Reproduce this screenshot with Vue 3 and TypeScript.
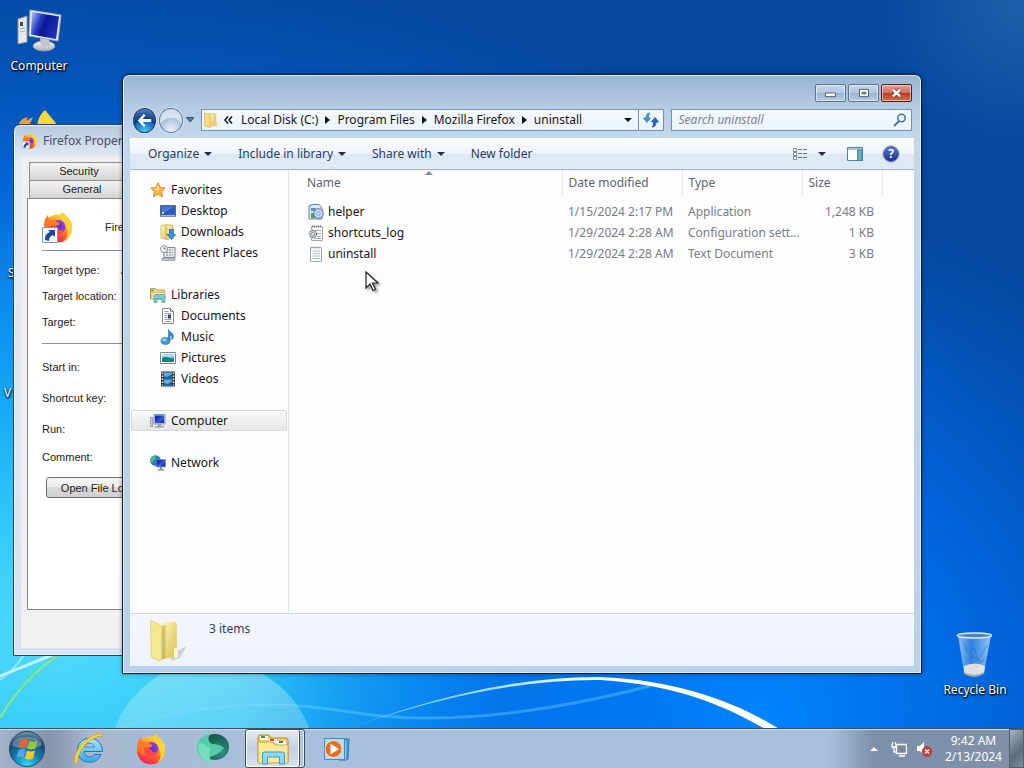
<script setup lang="ts">
import { ref } from 'vue'

interface NavItem {
  label: string
  icon: string
  selected?: boolean
}

interface NavGroup {
  head: NavItem
  items: NavItem[]
}

interface FileRow {
  name: string
  icon: string
  modified: string
  type: string
  size: string
}

const search = ref('')

const crumbs: string[] = ['Local Disk (C:)', 'Program Files', 'Mozilla Firefox', 'uninstall']

const commands = [
  { label: 'Organize', menu: true },
  { label: 'Include in library', menu: true },
  { label: 'Share with', menu: true },
  { label: 'New folder', menu: false },
]

const groups: NavGroup[] = [
  {
    head: { label: 'Favorites', icon: 'star' },
    items: [
      { label: 'Desktop', icon: 'desktop' },
      { label: 'Downloads', icon: 'downloads' },
      { label: 'Recent Places', icon: 'recent' },
    ],
  },
  {
    head: { label: 'Libraries', icon: 'libraries' },
    items: [
      { label: 'Documents', icon: 'document' },
      { label: 'Music', icon: 'music' },
      { label: 'Pictures', icon: 'pictures' },
      { label: 'Videos', icon: 'videos' },
    ],
  },
  { head: { label: 'Computer', icon: 'pc-small', selected: true }, items: [] },
  { head: { label: 'Network', icon: 'network' }, items: [] },
]

const files: FileRow[] = [
  { name: 'helper', icon: 'program', modified: '1/15/2024 2:17 PM', type: 'Application', size: '1,248 KB' },
  { name: 'shortcuts_log', icon: 'config', modified: '1/29/2024 2:28 AM', type: 'Configuration sett...', size: '1 KB' },
  { name: 'uninstall', icon: 'text', modified: '1/29/2024 2:28 AM', type: 'Text Document', size: '3 KB' },
]

const tasks = [
  { label: 'Internet Explorer', icon: 'ie', active: false },
  { label: 'Firefox', icon: 'firefox', active: false },
  { label: 'Browser', icon: 'swirl', active: false },
  { label: 'Windows Explorer', icon: 'explorer', active: true },
  { label: 'Media Player', icon: 'media', active: false },
]
</script>

<template>
  <div class="desktop">
    <svg class="defs" aria-hidden="true">
      <defs>
        <linearGradient id="gFolder" x1="0" x2="1" y1="0" y2="1"><stop offset="0" stop-color="#fdf6b8" /><stop offset="1" stop-color="#dcc050" /></linearGradient>
        <linearGradient id="gScreen" x1="0" x2="1" y1="0" y2="1"><stop offset="0" stop-color="#0a1fa0" /><stop offset=".45" stop-color="#1c3cc8" /><stop offset=".5" stop-color="#3c64dc" /><stop offset="1" stop-color="#0a22a8" /></linearGradient>
        <linearGradient id="gMonitor" x1="0" x2="1" y1=".2" y2=".6"><stop offset="0" stop-color="#9cb4f4" /><stop offset=".3" stop-color="#2440c0" /><stop offset=".5" stop-color="#0a1898" /><stop offset="1" stop-color="#1c34b4" /></linearGradient>
        <linearGradient id="gGrey" x1="0" x2="0" y1="0" y2="1"><stop offset="0" stop-color="#fafafa" /><stop offset="1" stop-color="#a8b0b8" /></linearGradient>
        <linearGradient id="gFox" x1=".8" x2=".3" y1="0" y2="1"><stop offset="0" stop-color="#ffe23a" /><stop offset=".4" stop-color="#ff9a20" /><stop offset=".75" stop-color="#ff4838" /><stop offset="1" stop-color="#e8206c" /></linearGradient>
        <radialGradient id="gFoxCore"><stop offset="0" stop-color="#5a2ad0" /><stop offset="1" stop-color="#9040e0" /></radialGradient>
        <radialGradient id="gOrb" cx=".5" cy=".95" r=".95"><stop offset="0" stop-color="#30d8f8" /><stop offset=".4" stop-color="#1280b0" /><stop offset=".75" stop-color="#164a70" /><stop offset="1" stop-color="#7c98ac" /></radialGradient>
        <linearGradient id="gIe" x1="0" x2="0" y1="0" y2="1"><stop offset="0" stop-color="#a8e8fc" /><stop offset="1" stop-color="#38a8e4" /></linearGradient>
        <linearGradient id="gBin" x1="0" x2="1"><stop offset="0" stop-color="#a8d4f8" stop-opacity=".85" /><stop offset=".4" stop-color="#4a94e0" stop-opacity=".6" /><stop offset="1" stop-color="#c0e0fa" stop-opacity=".8" /></linearGradient>
        <radialGradient id="gTeal" cx=".7" cy=".7" r=".8"><stop offset="0" stop-color="#2c9080" /><stop offset="1" stop-color="#185048" /></radialGradient>
      </defs>

      <symbol id="computer" viewBox="0 0 48 44">
        <path d="M3 10l9-3v26l-9 2z" fill="#e8eae8" stroke="#8c96a0" />
        <path d="M5 13h3v4H5z" fill="#445" />
        <path d="M5 20l5-1M5 23l5-1" stroke="#a0a8b0" />
        <ellipse cx="29" cy="37" rx="11" ry="5" fill="url(#gGrey)" stroke="#909aa4" />
        <path d="M25 29l9 1 1 7h-9z" fill="#c0c6cc" />
        <path d="M15 1l31 5-3 26-29-5z" fill="#e4e8ee" stroke="#a0a8b4" />
        <path d="M17 3l27 4.500-3 22.500L16 25.500z" fill="url(#gMonitor)" />
      </symbol>

      <symbol id="pc-small" viewBox="0 0 16 16">
        <path d="M.5 4.500h2v9h-2z" fill="#c8ccd4" stroke="#80889a" stroke-width=".7" />
        <path d="M4 1.500h11v9.500H4z" fill="#c8d0e8" stroke="#8890a8" />
        <path d="M5 2.500h9v7.500H5z" fill="url(#gScreen)" />
        <path d="M8 11h3v2h3v1.500H5V13h3z" fill="#9aa2b0" />
      </symbol>

      <symbol id="firefox" viewBox="0 0 32 32">
        <circle cx="16" cy="17.500" r="14" fill="url(#gFox)" />
        <path d="M20 1c4 3 9 7 10 13 1 8-3 14-8 16 4-4 5-9 2-14-1-5-5-7-6-10 0-2 1-4 2-5z" fill="#ffd432" />
        <circle cx="16.500" cy="16" r="7" fill="url(#gFoxCore)" />
        <path d="M2 15C2 9 4 6 6 4c0 2 1 4 2 5 3-1 5 0 7 2 2 0 3 1 2 3l-5 1c-2 2-1 5 3 6-5 3-12-1-13-6z" fill="#ff7a28" />
        <path d="M9 15c4-1 8 1 8 4 2 1 4 0 6-1-2 6-11 7-14 1z" fill="#ff4840" />
      </symbol>

      <symbol id="shortcut" viewBox="0 0 16 16">
        <path d="M.5.5h15v15H.5z" fill="#f4f8fc" stroke="#8898a8" />
        <path d="M3 13c0-5 2-7 5-8L6 3h7v7l-2-2c-3 1-4 3-4 6z" fill="#1c4c98" />
      </symbol>

      <symbol id="star" viewBox="0 0 16 16">
        <path d="M8 .8l2.200 4.700 5 .6-3.700 3.500 1 5.200L8 12.200 3.500 14.800l1-5.200L.8 6.100l5-.6z" fill="#fcb83c" stroke="#e08a28" />
        <path d="M8 3l1.300 3.500L8 9 4 7l2.700-.5z" fill="#ffeaa0" />
      </symbol>
      <symbol id="desktop" viewBox="0 0 16 16">
        <path d="M.5 2.500h15v11H.5z" fill="#2a5cc0" stroke="#5a6a8a" />
        <path d="M1.500 3.500h13L2 11z" fill="#4878d4" />
        <path d="M1 12h14v1.500H1z" fill="#a8b8d0" /><path d="M2 9h2v2H2z" fill="#cfe0f8" />
      </symbol>
      <symbol id="downloads" viewBox="0 0 16 16">
        <path d="M1 1.500L7 .5l6 1v13l-6 1-6-1.500z" fill="url(#gFolder)" stroke="#c8ac50" stroke-width=".7" />
        <path d="M6 1v14" stroke="#c8ac50" />
        <path d="M9.500 5.500h4v5H16l-4.500 5L7 10.500h2.500z" fill="#3090e0" stroke="#1c60a8" stroke-width=".6" />
      </symbol>
      <symbol id="recent" viewBox="0 0 16 16">
        <path d="M4 2.500h11v10H4z" fill="#e4e8ec" stroke="#808890" />
        <path d="M6 5h7M6 7.500h7M6 10h7" stroke="#808890" stroke-dasharray="2 1" />
        <path d="M2 13h13v2.500H2z" fill="#b8c0c8" stroke="#808890" stroke-width=".6" />
        <circle cx="4" cy="4" r="3.500" fill="#f6f8fa" stroke="#8c949c" /><path d="M4 2v2h2" fill="none" stroke="#555" stroke-width=".8" />
      </symbol>
      <symbol id="libraries" viewBox="0 0 16 16">
        <path d="M.5 1.500h5l1 1.500h8v9H.5z" fill="#f8e084" stroke="#b89c48" />
        <path d="M1 3.500h3" stroke="#48a848" stroke-width="1.500" />
        <path d="M2 5.500h13v7H2z" fill="#fbeea8" stroke="#c4a854" stroke-width=".7" />
        <path d="M4 15.500V9.500q0-2 2-2h7q2 0 2 2v6h-3v-4H7v4z" fill="#7cc8dc" stroke="#4898b0" stroke-width=".7" />
      </symbol>
      <symbol id="document" viewBox="0 0 16 16">
        <path d="M2.500.5h8l3 3v12h-11z" fill="#fff" stroke="#808890" /><path d="M10.500.5v3h3" fill="none" stroke="#808890" />
        <path d="M4.500 3.500h4M4.500 5.500h7M4.500 7.500h3M4.500 9.500h3M4.500 11.500h7M4.500 13.500h7" stroke="#98a0a8" /><path d="M8 6.500h3v4H8z" fill="#404858" />
      </symbol>
      <symbol id="music" viewBox="0 0 16 16">
        <ellipse cx="5.500" cy="12" rx="4.500" ry="3.500" fill="#3c9ce0" stroke="#1c68a8" stroke-width=".6" />
        <path d="M8.500.5c1 3 5 3 5 7 0 1-1 3-2 3 1-3 0-4-1.500-4.500V12l-1.500-1z" fill="#3488cc" stroke="#1c68a8" stroke-width=".6" />
        <ellipse cx="4.500" cy="11" rx="2" ry="1.200" fill="#a8dcf8" />
      </symbol>
      <symbol id="pictures" viewBox="0 0 16 16">
        <path d="M.5 2.500h15v11H.5z" fill="#fff" stroke="#7c8894" /><path d="M2 4h12v8H2z" fill="#68bce0" />
        <path d="M2 9c3-3 5-2 7-1s3 0 5 0v4H2z" fill="#1c8078" /><path d="M2 4.500h12v2H2z" fill="#bfe8f8" />
      </symbol>
      <symbol id="videos" viewBox="0 0 16 16">
        <path d="M1 .5h14v15H1z" fill="#303840" /><path d="M4 1.500h8v6H4zM4 8.500h8v6H4z" fill="#5cb0e8" />
        <path d="M4 7.500V5l3 1 5-3v4.500zM4 14.500V12l4 1 4-3v4.500z" fill="#1c60a0" />
        <path d="M2.500 1.500v13M13.500 1.500v13" stroke="#e8f0f4" stroke-width="1.500" stroke-dasharray="1.500 1.500" />
      </symbol>
      <symbol id="network" viewBox="0 0 16 16">
        <circle cx="5.500" cy="5.500" r="5.300" fill="#1c78c0" /><path d="M2 2c3-2 5-1 4 1S3 5 3 8C0 7 0 4 2 2zM6 6l4-2v4H7z" fill="#48c080" />
        <path d="M6 4.500h9.500v7.500H6z" fill="#b8c8f0" stroke="#6878a8" stroke-width=".7" /><path d="M6.500 5h8.500v6.500H6.500z" fill="url(#gScreen)" /><path d="M10 12h2v2h2v1.500H8V14h2z" fill="#8890a4" />
      </symbol>
      <symbol id="program" viewBox="0 0 16 16">
        <path d="M1 2l3-1.500h7L14 4v11H1z" fill="#dce8f4" stroke="#6880a0" /><path d="M3 4h5v3H3z" fill="#5c90c8" />
        <path d="M3 9h4v5H3z" fill="#3ca850" /><circle cx="10.500" cy="9.500" r="4.800" fill="#c4d4f4" stroke="#5870b8" /><circle cx="10.500" cy="9.500" r="1.500" fill="#fff" stroke="#7890c8" />
      </symbol>
      <symbol id="config" viewBox="0 0 16 16">
        <path d="M3.500 1.500h11v14h-11z" fill="#fafafa" stroke="#a0a8ac" /><path d="M4 1.500h10" stroke="#707880" stroke-width="2" stroke-dasharray="1 1" />
        <path d="M8 5.500h5M9 8.500h4M9 11.500h4M6 13.500h7" stroke="#a8b0b4" /><circle cx="5" cy="9" r="3.500" fill="#d8dcdf" stroke="#707880" stroke-width="1.500" stroke-dasharray="1.500 1" /><circle cx="5" cy="9" r="1.500" fill="#fff" stroke="#707880" stroke-width=".8" />
      </symbol>
      <symbol id="text" viewBox="0 0 16 16">
        <path d="M2.500 1.500h11v14h-11z" fill="#fafafa" stroke="#a0a8ac" /><path d="M3 1.500h10" stroke="#a0a8ac" stroke-width="2" stroke-dasharray="1 1" />
        <path d="M4.500 5h7.500M4.500 7.500h7.500M4.500 10h7.500M4.500 12.500h7.500" stroke="#b4bcc0" />
      </symbol>
      <symbol id="folder" viewBox="0 0 40 44">
        <path d="M26 34l12-6-7 12-10 3z" fill="#555" opacity=".22" />
        <path d="M12 4l14-1q2 0 2 2v34l-14 2z" fill="url(#gFolder)" />
        <path d="M1 3q0-2 2-1l9 5 1 3v31l-3 2L2 39z" fill="#f4e890" stroke="#dcc868" stroke-width=".7" />
        <path d="M12.500 8l4-2v34l-4 2z" fill="#a89438" opacity=".45" /><path d="M25 30q4-3 4 6v3l-4 1z" fill="#fff8d0" />
      </symbol>
      <symbol id="folder-small" viewBox="0 0 16 16">
        <path d="M6 1.500h6q1 0 1 1v11l-7 1z" fill="url(#gFolder)" stroke="#d8b84c" stroke-width=".5" /><path d="M1.500 1L7 2.500v13L1.500 14z" fill="#f4dc80" stroke="#d8b84c" stroke-width=".7" /><path d="M12 9l3 4-5 2z" fill="#e8d070" />
      </symbol>

      <symbol id="ie" viewBox="0 0 32 32">
        <path d="M29.500 18.500H11c0 6 8 7 10 3h7C24.500 33 4 32 4.500 17 5 1 29.500 1 29.500 18.500z" fill="url(#gIe)" stroke="#1c78bc" />
        <path d="M11.500 14h10c-1-5-9-5-10 0z" fill="#b0c4de" stroke="#1c78bc" stroke-width=".8" />
        <path d="M2 31C-1 24 8 5 25 1q6-1 5 3-2-2-6 0C12 8 5 20 4 30z" fill="#f8d440" stroke="#d8a018" stroke-width=".7" />
      </symbol>
      <symbol id="swirl" viewBox="0 0 32 32">
        <ellipse cx="18" cy="14" rx="14" ry="13" fill="url(#gTeal)" />
        <path d="M0 13C1 6 7 1 14 1c-4 3-3 8 1 10 5 0 8 1 12 4-4 5-8 7-14 9-1 3 0 5 1 7C5 28-1 22 0 13z" fill="#54ccaa" />
        <path d="M2 11c4-3 5 2 9 3s0 8 2 17C4 27 0 19 2 11z" fill="#78dcc0" />
      </symbol>
      <symbol id="explorer" viewBox="0 0 32 32">
        <path d="M1 4q0-2 2-2h9l2 3h15q2 0 2 2v22H1z" fill="#f4cc5c" stroke="#b88c28" />
        <path d="M3 3h8v4H3z" fill="#fff" /><path d="M4 4h4" stroke="#30a030" stroke-width="2" />
        <path d="M12 6h8v4h-8z" fill="#fff" /><path d="M13 7h4" stroke="#d84830" stroke-width="2" /><path d="M20 8h9v4h-9z" fill="#fff" /><path d="M22 9h4" stroke="#3878c8" stroke-width="2" />
        <path d="M1 9h15l2 3h13v18H1z" fill="#fce898" stroke="#d0a840" />
        <path d="M5.500 31V21q0-2 2-2h18q2 0 2 2v10h-5v-7h-12v7z" fill="#90d8f0" stroke="#3c98c0" />
      </symbol>
      <symbol id="media" viewBox="0 0 32 32">
        <path d="M22 6h6l-1 20h-5z" fill="#6cb4e4" stroke="#2c78b4" /><path d="M18 6h8v21h-8z" fill="#88c8ec" stroke="#2c78b4" />
        <path d="M3.500 5.500h20v21h-20z" fill="#b4dcf0" stroke="#4088b8" /><circle cx="12.500" cy="16" r="8.500" fill="#ec6c20" stroke="#fff0e0" stroke-width=".8" /><path d="M9.500 10.500l8.500 5.500-8.500 5.500z" fill="#fff" />
      </symbol>
      <symbol id="orb" viewBox="0 0 36 36">
        <circle cx="18" cy="18" r="17.500" fill="url(#gOrb)" stroke="#284860" />
        <path d="M3 14C6 3 30 3 33 14c-8 5-22 5-30 0z" fill="#fff" opacity=".28" />
        <path d="M12 9q4-2 7 0l-2 8q-3-2-7 0z" fill="#f06028" /><path d="M20.500 10q4 2 8-.5l-2 8q-4 2-8 0z" fill="#98c83c" />
        <path d="M9.500 19q4-2 7 0l-2 8q-4-2-7 0z" fill="#50a8ec" /><path d="M18 19.500q4 2 8 0l-2 8q-4 2-8 0z" fill="#fcc828" />
      </symbol>
      <symbol id="bin" viewBox="0 0 40 48">
        <path d="M3 4l6 38q10 7 20 0l7-38z" fill="url(#gBin)" /><path d="M9 35q11-5 21 0l-1 7q-10 6-20 0z" fill="#f0e8e0" opacity=".9" />
        <path d="M9 12l4 10 6-5 4 12 9-15M11 30l7-5 8 6 4-3" fill="none" stroke="#2060b0" opacity=".45" />
        <ellipse cx="19.500" cy="4.500" rx="17" ry="2.500" fill="#4a84bc" stroke="#d4e8f8" stroke-width="1.500" />
        <path d="M9 42q10 6 20 0" fill="none" stroke="#a8a4a4" stroke-width="2" />
      </symbol>
    </svg>

    <svg class="wallpaper" viewBox="0 0 1024 768" preserveAspectRatio="none" aria-hidden="true">
      <defs>
        <radialGradient id="w0" gradientUnits="userSpaceOnUse" cx="60" cy="640" r="1000" gradientTransform="translate(0 205) scale(1 .68)">
          <stop offset="0" stop-color="#52dafa" /><stop offset=".16" stop-color="#34ccfa" /><stop offset=".36" stop-color="#14a8f6" /><stop offset=".52" stop-color="#0a86ea" /><stop offset=".66" stop-color="#0468d8" /><stop offset=".8" stop-color="#0456bc" /><stop offset="1" stop-color="#0548a0" />
        </radialGradient>
        <radialGradient id="w1" gradientUnits="userSpaceOnUse" cx="760" cy="720" r="520"><stop offset="0" stop-color="#0084fc" /><stop offset=".5" stop-color="#006cec" stop-opacity=".75" /><stop offset="1" stop-color="#0068e4" stop-opacity="0" /></radialGradient>
        <radialGradient id="w2" gradientUnits="userSpaceOnUse" cx="1024" cy="0" r="150"><stop offset="0" stop-color="#4a90b8" stop-opacity=".35" /><stop offset="1" stop-color="#4a90b8" stop-opacity="0" /></radialGradient>
        <linearGradient id="w3" x1="0" x2="1"><stop offset="0" stop-color="#9be8ff" stop-opacity=".5" /><stop offset=".5" stop-color="#dff8ff" /><stop offset=".7" stop-color="#fff" /></linearGradient>
        <linearGradient id="w4" x1="0" x2="0" y1="0" y2="1"><stop offset="0" stop-color="#c8f4f0" stop-opacity=".4" /><stop offset="1" stop-color="#c8f4f0" stop-opacity=".1" /></linearGradient>
      </defs>
      <path d="M0 0h1024v768H0z" fill="url(#w0)" />
      <path d="M0 0h1024v768H0z" fill="url(#w1)" />
      <path d="M0 0h1024v768H0z" fill="url(#w2)" />
      <circle cx="212" cy="765" r="104" fill="url(#w4)" />
      <path d="M120 728Q230 692 350 712T650 686" fill="none" stroke="#7fdcff" stroke-width="3" opacity=".35" />
      <path d="M350 728Q490 676 600 677C680 680 740 704 781 730L767 730C722 704 675 685 600 680Q490 679 350 728z" fill="url(#w3)" />
      <path d="M0 676Q30 664 52 655" fill="none" stroke="#dff8ff" stroke-width="3" opacity=".8" />
      <path d="M0 680Q14 670 24 655" fill="none" stroke="#b8f0ff" stroke-width="2" opacity=".7" />
      <path d="M0 718Q22 680 58 655" fill="none" stroke="#90e878" stroke-width="2" />
    </svg>

    <ul class="shortcuts">
      <li><svg class="big"><use href="#computer" /></svg><span>Computer</span></li>
      <li class="flames">
        <svg viewBox="0 0 44 44"><path d="M20 18q1-10 8-16l10 12 4 6z" fill="#f8d838" /><path d="M2 18q0-7 9-9l-2 4 7-4-4 9z" fill="#f0a040" /></svg>
      </li>
      <li class="peek"><span>S</span></li>
      <li class="peek v"><span>V</span></li>
    </ul>

    <div class="recycle"><svg><use href="#bin" /></svg><span>Recycle Bin</span></div>

    <section class="props">
      <header>
        <span class="fox"><svg><use href="#firefox" /></svg><svg class="arrow"><use href="#shortcut" /></svg></span>
        <h2>Firefox Properties</h2>
      </header>
      <div class="client">
        <div class="tabs">
          <button type="button" class="tab">Security</button>
          <button type="button" class="tab wide">General</button>
        </div>
        <div class="sheet">
          <div class="ident">
            <span class="fox large"><svg><use href="#firefox" /></svg><svg class="arrow"><use href="#shortcut" /></svg></span>
            <span>Firefox</span>
          </div>
          <dl class="fields">
            <dt>Target type:</dt><dd>Application</dd>
            <dt>Target location:</dt><dd></dd>
            <dt>Target:</dt><dd></dd>
          </dl>
          <dl class="fields tall">
            <dt>Start in:</dt><dd></dd>
            <dt>Shortcut key:</dt><dd></dd>
            <dt>Run:</dt><dd></dd>
          </dl>
          <dl class="fields last"><dt>Comment:</dt><dd></dd></dl>
          <button type="button" class="open">Open File Location</button>
        </div>
      </div>
    </section>

    <main class="explorer">
      <div class="caption">
        <button type="button" aria-label="Minimize"><svg viewBox="0 0 32 17"><path d="M10.500 8.500h11v4h-11z" fill="#fff" stroke="#4a5468" /></svg></button>
        <button type="button" aria-label="Maximize"><svg viewBox="0 0 32 17"><path d="M11.500 4.500h10v8h-10z" fill="#fff" stroke="#4a5468" /><path d="M14.500 7.500h4v2h-4z" fill="#a8b8cc" stroke="#4a5468" /></svg></button>
        <button type="button" class="close" aria-label="Close"><svg viewBox="0 0 32 17"><path d="M12 5l8 7M20 5l-8 7" stroke="#5a3030" stroke-width="4.500" /><path d="M12 5l8 7M20 5l-8 7" stroke="#fff" stroke-width="2.800" /></svg></button>
      </div>

      <div class="navbar">
        <div class="travel">
          <button type="button" class="round back" aria-label="Back"><svg viewBox="0 0 26 26"><path d="M12 5L4.500 13l7.500 8 2-2-3.500-4.200H21v-3.600H10.500L14 7z" fill="#fff" /></svg></button>
          <button type="button" class="round" aria-label="Forward"></button>
          <button type="button" class="recent" aria-label="Recent pages"><svg viewBox="0 0 9 6"><path d="M.5.5h8l-4 5z" fill="#3c88a8" stroke="#204868" /></svg></button>
        </div>
        <div class="address">
          <svg class="ico"><use href="#folder-small" /></svg>
          <button type="button" class="chev" aria-label="Parent folders"><svg viewBox="0 0 9 8"><path d="M4 .5L1 4l3 3.500M8 .5L5 4l3 3.500" fill="none" stroke="#111" stroke-width="1.500" /></svg></button>
          <template v-for="(crumb, i) in crumbs" :key="crumb">
            <svg v-if="i > 0" class="sep" viewBox="0 0 5 8"><path d="M0 0l5 4-5 4z" fill="#111" /></svg>
            <button type="button" class="crumb">{{ crumb }}</button>
          </template>
          <button type="button" class="drop" aria-label="Previous locations"><svg class="tri" viewBox="0 0 8 4"><path d="M0 0h8L4 4z" fill="#111" /></svg></button>
          <button type="button" class="refresh" aria-label="Refresh">
            <svg viewBox="0 0 16 16"><path d="M7 1C4 1 3 3 3 6H.5L4 10.500 7.500 6H5.500C5.500 4 5.500 2.500 7 1z" fill="#3c98cc" stroke="#3c98cc" /><path d="M9 15c3 0 4-2 4-5h2.500L12 5.500 8.500 10h2c0 2 0 3.500-1.500 5z" fill="#2864b4" stroke="#2864b4" /></svg>
          </button>
        </div>
        <div class="search">
          <input v-model="search" type="text" placeholder="Search uninstall" aria-label="Search uninstall" />
          <svg viewBox="0 0 14 14"><circle cx="8.500" cy="5" r="3.700" fill="#e8f4fc" stroke="#4078a8" stroke-width="1.500" /><path d="M6 8l-5 5" stroke="#4078a8" stroke-width="2" /></svg>
        </div>
      </div>

      <div class="body">
        <div class="toolbar">
          <button v-for="c in commands" :key="c.label" type="button">
            {{ c.label }}<svg v-if="c.menu" class="tri" viewBox="0 0 8 4"><path d="M0 0h8L4 4z" fill="#1e3050" /></svg>
          </button>
          <div class="tools">
            <button type="button" aria-label="Change your view"><svg class="ico" viewBox="0 0 16 16"><path d="M1.500 2.500h3v3h-3zM1.500 6.500h3v3h-3zM1.500 10.500h3v3h-3z" fill="#fff" stroke="#68707c" stroke-width=".8" /><path d="M6 3.500h10M6 7.500h10M6 11.500h10" stroke="#68707c" stroke-dasharray="4 1" /></svg></button>
            <button type="button" aria-label="More views"><svg class="tri" viewBox="0 0 8 4"><path d="M0 0h8L4 4z" fill="#1e3050" /></svg></button>
            <button type="button" class="pane" aria-label="Show the preview pane"><svg class="ico" viewBox="0 0 16 16"><path d="M.5 1.500h15v13H.5z" fill="#fff" stroke="#4a84a0" /><path d="M1 2h14v2H1z" fill="#a4c8d8" /><path d="M10.500 4v10.500H15V4z" fill="#60b0c0" stroke="#4a84a0" /></svg></button>
            <button type="button" class="help" aria-label="Get help">?</button>
          </div>
        </div>

        <div class="split">
          <nav class="tree">
            <ul v-for="g in groups" :key="g.head.label">
              <li><a href="#" :class="{ selected: g.head.selected }"><svg class="ico"><use :href="'#' + g.head.icon" /></svg>{{ g.head.label }}</a></li>
              <li v-for="n in g.items" :key="n.label" class="sub"><a href="#"><svg class="ico"><use :href="'#' + n.icon" /></svg>{{ n.label }}</a></li>
            </ul>
          </nav>
          <div class="list">
            <table>
              <colgroup><col class="c-name" /><col class="c-mid" /><col class="c-mid" /><col class="c-size" /></colgroup>
              <thead>
                <tr>
                  <th scope="col" class="sorted"><svg viewBox="0 0 8 4"><path d="M0 4l4-4 4 4z" fill="#7890a8" /></svg>Name</th>
                  <th scope="col">Date modified</th><th scope="col">Type</th><th scope="col">Size</th>
                </tr>
              </thead>
              <tbody>
                <tr v-for="f in files" :key="f.name">
                  <td class="name"><span><svg class="ico"><use :href="'#' + f.icon" /></svg>{{ f.name }}</span></td>
                  <td>{{ f.modified }}</td><td>{{ f.type }}</td><td class="size">{{ f.size }}</td>
                </tr>
              </tbody>
            </table>
          </div>
        </div>

        <footer class="details"><svg><use href="#folder" /></svg><span>3 items</span></footer>
      </div>
    </main>

    <svg class="cursor" viewBox="0 0 14 21" aria-hidden="true"><path d="M1 1v16l4-4 3 6.500 2.500-1.200L7.500 12H13z" fill="#fff" stroke="#222" stroke-width="1.200" /></svg>

    <footer class="taskbar">
      <button type="button" class="start" aria-label="Start"><svg><use href="#orb" /></svg></button>
      <button v-for="t in tasks" :key="t.label" type="button" class="task" :class="{ active: t.active }" :aria-label="t.label">
        <span><svg><use :href="'#' + t.icon" /></svg></span>
      </button>
      <div class="tray">
        <button type="button" aria-label="Show hidden icons"><svg class="up" viewBox="0 0 8 4"><path d="M0 4l4-4 4 4z" fill="#fff" /></svg></button>
        <svg class="ico" viewBox="0 0 16 16"><path d="M5.500 3.500h10v9h-10z" fill="#78889c" stroke="#fff" stroke-width="1.400" /><path d="M8 15h6M1 3v3h4V3M3 6v5h2M1.500 1v2M4.500 1v2" fill="none" stroke="#fff" stroke-width="1.300" /></svg>
        <svg class="ico" viewBox="0 0 16 16"><path d="M1 5h3l4-4v13l-4-4H1z" fill="#fff" /><circle cx="11" cy="10.500" r="4.800" fill="#d83830" stroke="#a82018" stroke-width=".6" /><path d="M9 8.500l4 4M13 8.500l-4 4" stroke="#fff" stroke-width="1.500" /></svg>
        <div class="clock"><span>9:42 AM</span><span>2/13/2024</span></div>
      </div>
      <button type="button" class="peek-desktop" aria-label="Show desktop"></button>
    </footer>
  </div>
</template>

<style>
html,
body {
  margin: 0;
  height: 100%;
}
</style>

<style scoped>
.desktop {
  position: relative;
  min-height: 100vh;
  overflow: hidden;
  display: flex;
  flex-direction: column;
  justify-content: flex-end;
  font: 12px/16px "Noto Sans", "Open Sans", sans-serif;
  color: #1a1420;
}
.desktop *, .desktop *::before { box-sizing: border-box; }
button {
  font: inherit;
  color: inherit;
  background: none;
  border: 0;
  padding: 0;
  margin: 0;
}
a { color: inherit; text-decoration: none; }
ul { list-style: none; margin: 0; padding: 0; }
svg { display: block; flex: none; }
.defs { position: absolute; width: 0; height: 0; }
.ico { width: 16px; height: 16px; }
.tri { width: 8px; height: 4px; }
.wallpaper { position: absolute; inset: 0; width: 100%; height: 100%; }

/* Desktop icons */
.shortcuts { position: absolute; left: 2px; top: 9px; width: 74px; color: #fff; text-shadow: 1px 1px 2px #000, 0 1px 2px #000; }
.shortcuts li { display: flex; flex-direction: column; align-items: center; height: 99px; }
.big { width: 48px; height: 44px; margin-bottom: 5px; }
.flames svg { width: 44px; height: 44px; }
.shortcuts .peek { align-items: flex-start; height: 120px; padding: 58px 0 0 6px; }
.shortcuts .v { padding-left: 2px; }
.recycle { position: absolute; right: 9px; bottom: 70px; width: 80px; display: flex; flex-direction: column; align-items: center; gap: 3px; color: #fff; text-shadow: 1px 1px 2px #000, 0 1px 2px #000; }
.recycle svg { width: 40px; height: 48px; }

/* Properties dialog */
.props { position: absolute; left: 13px; top: 124px; bottom: 112px; width: 376px; padding: 0 7px 7px; display: flex; flex-direction: column; border: 1px solid #30404c; border-radius: 7px 7px 0 0; background: linear-gradient(#b4c8de, #e2eaf4 32px, #d8e4f2); box-shadow: inset 0 0 0 1px #eaf2fa; }
.props header { display: flex; align-items: center; gap: 5px; height: 32px; padding-left: 1px; color: #4a5068; }
.props h2 { margin: 0; font: inherit; }
.fox { position: relative; width: 16px; height: 16px; }
.fox svg { width: 100%; height: 100%; }
.fox .arrow { position: absolute; left: 0; bottom: 0; width: 50%; height: 50%; }
.large { width: 32px; height: 32px; }
.client { flex: 1; display: flex; flex-direction: column; padding: 5px 6px 38px; background: #f0f0f0; font: 11px/16px "Liberation Sans", Arial, sans-serif; color: #222; }
.tabs { display: flex; flex-direction: column; padding-left: 2px; }
.tab { width: 100px; height: 18px; border: 1px solid #8c8e94; border-bottom: 0; background: linear-gradient(#f4f4f4, #d4d4d4); box-shadow: 40px 0 0 #e2e2e2; line-height: 17px; }
.wide { width: 106px; }
.sheet { flex: 1; border: 1px solid #80838c; background: #fff; padding: 12px 14px; }
.ident { display: flex; align-items: center; gap: 31px; padding-bottom: 7px; border-bottom: 1px solid #8490a0; }
.fields { display: grid; grid-template-columns: 79px 1fr; grid-auto-rows: 26px; align-items: center; margin: 0; padding: 6px 0 8px; border-bottom: 1px solid #8490a0; }
.fields dd { margin: 0; }
.tall { grid-auto-rows: 31px; padding: 7px 0 0; border: 0; }
.last { padding: 0; border: 0; }
.open { margin: 7px 0 0 4px; width: 122px; height: 21px; border: 1px solid #707070; border-radius: 3px; background: linear-gradient(#f4f4f4, #ebebeb 50%, #dadada 50%, #cfcfcf); }

/* Explorer window */
.explorer { position: absolute; left: 122px; right: 102px; top: 74px; bottom: 94px; display: flex; flex-direction: column; padding: 9px 7px 7px; border: 1px solid #14202c; border-radius: 7px 7px 0 0; background: linear-gradient(#98b4d2, #b4cbe4 32px, #c2d6ec 60px, #b8d0e8); box-shadow: inset 0 0 0 1px #dcecf8, 0 0 4px rgba(0, 10, 40, .4); }
.caption { display: flex; justify-content: flex-end; gap: 2px; padding-right: 2px; }
.caption button { width: 31px; height: 18px; border: 1px solid #5c7490; border-radius: 2px; background: linear-gradient(#c4d6ea, #b4c8e0 50%, #9cb4d0 50%, #b4cce4); box-shadow: inset 0 0 0 1px rgba(255, 255, 255, .5); }
.caption svg { width: 100%; height: 100%; }
.caption .close { border-color: #501c1c; background: linear-gradient(#e4a090, #d07060 50%, #b83820 50%, #d07850); }
.navbar { display: flex; align-items: center; gap: 7px; height: 36px; padding: 0 2px 0 3px; }
.travel { display: flex; align-items: center; width: 61px; gap: 3px; }
.round { width: 25px; height: 25px; border: 1px solid #5c7898; border-radius: 50%; background: radial-gradient(circle at 50% 90%, #e8f4fc, #a8c0d8 50%, #d8e4f0 52%, #c8d8ea); box-shadow: 0 0 0 1px rgba(255, 255, 255, .4); }
.back { border-color: #24406c; background: radial-gradient(circle at 50% 100%, #48d4f8, #1468b8 45%, #0c3880 52%, #6090c8); }
.round svg { width: 100%; height: 100%; }
.recent { width: 9px; }
.address, .search { display: flex; align-items: center; height: 22px; border: 1px solid #7490b0; background: linear-gradient(#f4f9fe, #eaf2fb); }
.address { flex: 1; padding-left: 1px; }
.chev { width: 9px; margin: 0 8px 0 5px; }
.sep { width: 5px; height: 8px; margin: 0 7px; }
.crumb { white-space: nowrap; }
.drop { margin-left: auto; width: 20px; height: 100%; padding-left: 6px; }
.refresh { width: 25px; height: 100%; padding-left: 4px; border-left: 1px solid #7490b0; }
.refresh svg { width: 16px; height: 16px; }
.search { width: 31%; padding: 0 4px 0 7px; }
.search input { flex: 1; min-width: 0; padding: 0; border: 0; outline: 0; background: none; font: inherit; font-style: italic; }
.search input::placeholder { color: #7c8490; opacity: 1; }
.search svg { width: 14px; height: 14px; }
.body { flex: 1; display: flex; flex-direction: column; background: #fdfdfe; }
.toolbar { display: flex; align-items: center; height: 32px; padding: 0 15px 0 18px; gap: 26px; border-bottom: 1px solid #a0b4cc; background: linear-gradient(#fbfdff, #eff4fc 50%, #dce7f5 50%, #dfe9f5); color: #2c3c5c; }
.toolbar button { display: flex; align-items: center; gap: 5px; white-space: nowrap; }
.tools { display: flex; align-items: center; gap: 10px; margin-left: auto; }
.tools .pane { margin-left: 11px; }
.tools .help { justify-content: center; width: 16px; height: 16px; margin-left: 10px; border: 1px solid #4c5c90; border-radius: 50%; background: linear-gradient(#5c78c8, #1c3090); box-shadow: 0 0 0 1px #c8d0e0; color: #fff; font-weight: 700; }
.split { flex: 1; display: flex; }
.tree { width: 159px; padding: 9px 1px 0; border-right: 1px solid #dfe6f0; }
.tree ul { margin-bottom: 21px; }
.tree a { display: flex; align-items: center; gap: 5px; height: 21px; padding-left: 18px; border: 1px solid transparent; }
.tree .sub a { padding-left: 28px; }
.tree .selected { border-color: #d8d8d8; border-radius: 2px; background: linear-gradient(#f8f8f8, #e6e6e6); }
.list { flex: 1; min-width: 0; }
table { table-layout: fixed; border-collapse: collapse; width: 593px; }
.c-name { width: 273px; }
.c-mid { width: 120px; }
.c-size { width: 80px; }
th, td { padding: 0 0 0 6px; text-align: left; font-weight: 400; white-space: nowrap; color: #787c84; }
th { position: relative; height: 26px; color: #5c6470; border-right: 1px solid #e4eaf2; }
thead::after { content: ""; display: block; height: 5px; }
.sorted svg { position: absolute; left: 50%; top: 1px; width: 8px; height: 4px; }
th.sorted, td.name { padding-left: 18px; }
td { height: 21px; }
td.name { color: #1a1420; }
td.name span { display: flex; align-items: center; gap: 4px; padding-left: 1px; }
td.size { text-align: right; padding-right: 8px; }
.details { display: flex; gap: 20px; height: 53px; padding: 5px 19px; border-top: 1px solid #d0d8e4; background: linear-gradient(#f4f6fc, #eef2fb); color: #2c3c5c; }
.details svg { width: 40px; height: 43px; }
.details span { line-height: 20px; }
.cursor { position: absolute; left: 365px; top: 271px; width: 14px; height: 21px; filter: drop-shadow(2px 2px 1px rgba(0, 0, 0, .35)); }

/* Taskbar */
.taskbar { position: relative; display: flex; align-items: center; height: 40px; border-top: 1px solid #34506c; background: linear-gradient(90deg, #a4b4cc, #8494ac 50px, #a8b8d0 90px, #a8c0dc 280px, #a8c0dc calc(100% - 195px), #7c90aa calc(100% - 150px), #8090a8); box-shadow: inset 0 1px 0 #c8dcf0; }
.start { width: 54px; padding-left: 9px; margin-right: 5px; }
.start svg { width: 36px; height: 36px; }
.task { width: 60px; height: 39px; margin-right: 2px; display: flex; }
.task span { flex: 1; display: flex; align-items: center; justify-content: center; height: 39px; }
.task svg { width: 32px; height: 32px; }
.active { border: 1px solid #3c4c60; border-radius: 3px; padding-right: 4px; background: #b4c6da; box-shadow: inset 0 0 0 1px #e8f0f8; }
.active span { border-right: 1px solid #3c4c60; border-radius: 3px; background: linear-gradient(#e4eaf2, #c4d0e2 50%, #d8e0ec); box-shadow: inset 0 0 0 1px #fff; height: 37px; }
.tray { display: flex; align-items: center; gap: 9px; margin-left: auto; color: #fff; }
.tray .up { width: 8px; height: 4px; margin-right: 4px; }
.clock { display: flex; flex-direction: column; align-items: center; width: 63px; margin: 0 4px 0 1px; }
.peek-desktop { width: 15px; height: 39px; border: 1px solid #50606f; background: linear-gradient(135deg, #a8b4c0, #5c6c7c 60%, #7c8c9c); }
</style>
